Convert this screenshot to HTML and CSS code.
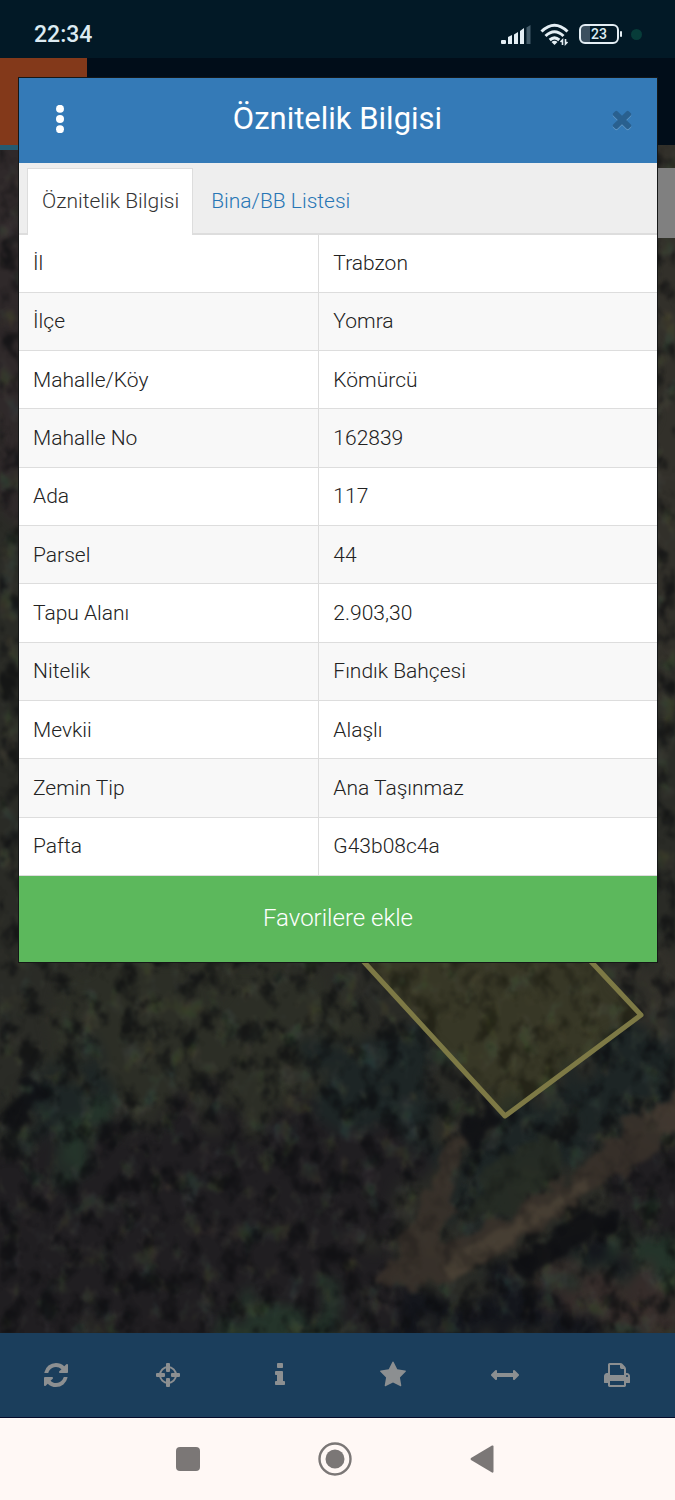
FILE: index.html
```html
<!DOCTYPE html>
<html lang="tr">
<head>
<meta charset="utf-8">
<meta name="viewport" content="width=device-width, initial-scale=1">
<title>Öznitelik Bilgisi</title>
<link rel="stylesheet" href="styles.css">
</head>
<body>
<div class="screen">
  <header class="status">
    <span class="status-time">22:34</span>
    <div class="status-icons">
      <svg width="30" height="19" viewBox="0 0 30 19" fill="#e4eef4"><rect y="15" width="5" height="4" rx="1"/><path d="M7 12l4-2v9H7zM13 9.500l4-2.500v12h-4zM19 6l4-3v16h-4z"/><path d="M25.500 2.500L29.500 0v19h-4z" fill="#435b69"/></svg>
      <svg width="30" height="23" viewBox="0 0 30 23" fill="none" stroke="#e4eef4" stroke-width="3"><path d="M1.500 8.500Q14.500-4 27.500 8.500M5.500 13q9-8.500 18 0M9.700 17q4.800-4.200 9.600 0"/><path d="M11.500 19l3 3 3-3q-3-2.500-6 0z" fill="#e4eef4" stroke="none"/><path d="M22.500 22v-5l-2 2M25.500 16v5l2-2" stroke-width="1.600"/></svg>
      <div class="battery"><span>23</span></div>
      <i class="privacy-dot"></i>
    </div>
  </header>
  <div class="appbar"><div class="appbar-menu"></div></div>
  <main class="map">
    <svg class="map-image" viewBox="0 0 675 1188" preserveAspectRatio="xMidYMax slice" aria-hidden="true">
      <defs>
        <filter id="soft" x="-20%" y="-20%" width="140%" height="140%" color-interpolation-filters="sRGB"><feTurbulence type="fractalNoise" baseFrequency="0.025" numOctaves="4" seed="4" result="n"/><feDisplacementMap in="SourceGraphic" in2="n" scale="110" xChannelSelector="R" yChannelSelector="G"/><feGaussianBlur stdDeviation="6"/></filter>
        <filter id="rough" x="-10%" y="-10%" width="120%" height="120%" color-interpolation-filters="sRGB"><feTurbulence type="fractalNoise" baseFrequency="0.050" numOctaves="3" seed="9" result="n"/><feDisplacementMap in="SourceGraphic" in2="n" scale="30" xChannelSelector="R" yChannelSelector="G"/><feGaussianBlur stdDeviation="2"/></filter>
        <filter id="dark" x="0" y="0" width="100%" height="100%" color-interpolation-filters="sRGB"><feTurbulence type="fractalNoise" baseFrequency="0.050 0.040" numOctaves="4" seed="21"/><feColorMatrix values="0 0 0 0 0.040  0 0 0 0 0.045  0 0 0 0 0.055  4 0 0 0 -2"/><feGaussianBlur stdDeviation="1"/></filter>
        <filter id="light" x="0" y="0" width="100%" height="100%" color-interpolation-filters="sRGB"><feTurbulence type="fractalNoise" baseFrequency="0.050 0.040" numOctaves="4" seed="7"/><feColorMatrix values="0.300 0 0 0 0.130  0 0.300 0 0 0.120  0 0 0.300 0 0.100  0 4 0 0 -1.900"/><feGaussianBlur stdDeviation="1"/></filter>
      </defs>
      <rect width="675" height="1188" fill="#2a2b26"/>
      <g filter="url(#soft)">
        <path fill="#2f292a" d="M-20-20h60v380h-60z"/>
        <path fill="#32302a" d="M640-20h60v560h-60zM640 800h60v80h-60z"/>
        <path fill="#2c2e26" d="M60 815h260l60 80-60 60-120 20-140-40z"/>
        <path fill="#1d2525" d="M310 900l80-20 70 80-40 50-60 80-60 20zM0 970l80-60 30 60-70 30zM680 860v100l-160 60-40 100-30-70 50-90z"/>
        <path fill="#201e21" d="M-60 1000l180-10 100-30 200 20-40 110 40 120H-60zM620 1000h100v110l-100-20z"/>
        <path fill="#24342a" d="M60 970h40v46H55zM570 1100h110v50h-80zM230 1165h120v50H230z"/>
        <path fill="#14161c" d="M400 1155l130-20 100 70H360zM560 1110l60-30 10 40z"/>
        <path fill="#352c2a" d="M540 1110l140 35v30l-130-25z"/>
      </g>
      <rect width="675" height="1188" filter="url(#light)" opacity=".3"/>
      <rect width="675" height="1188" filter="url(#dark)" opacity=".55"/>
      <g filter="url(#rough)" opacity=".85">
        <path fill="#3a322b" d="M378 1138l36-64 36-76 14-10-14 75-10 36 74-32 78-50 46-50 48 18-70 46-100 70-80 40z"/>
        <path fill="#4c4236" d="M440 1117l90-50 50-35 12 14-55 35-80 50z"/>
        <path fill="#463b32" d="M640 965l50-20v62l-28-24z"/>
        <path fill="#0e0f13" d="M510 1118l55-42 48-18 6 20-40 20-50 38zM0 984l20 8 10-35 20-10-25-14zM455 985l26-12 10-34 8 36-24 38z"/>
        <path fill="#262c24" d="M462 1072l34-60 48-20 22 30-50 40z"/>
      </g>
      <rect width="675" height="1188" filter="url(#dark)" opacity=".2"/>
      <path d="M310 765l54 52L505 971l136-101L540 762z" fill="#bcb62c" fill-opacity=".09" stroke="#7d7945" stroke-width="5" stroke-linejoin="round"/>
    </svg>
    <div class="map-control"></div>
  </main>
  <nav class="toolbar" aria-label="Harita araçları">
    <button type="button" aria-label="Yenile"><svg viewBox="-128 0 1792 1792"><path d="M1511 1056q0 5-1 7-64 268-268 434.500t-478 166.500q-146 0-282.500-55t-243.500-157l-129 129q-19 19-45 19t-45-19-19-45v-448q0-26 19-45t45-19h448q26 0 45 19t19 45-19 45l-137 137q71 66 161 102t187 36q134 0 250-65t186-179q11-17 53-117 8-23 30-23h192q13 0 22.500 9.500t9.500 22.500zm25-800v448q0 26-19 45t-45 19h-448q-26 0-45-19t-19-45 19-45l138-138q-148-137-349-137-134 0-250 65t-186 179q-11 17-53 117-8 23-30 23h-199q-13 0-22.500-9.500t-9.500-22.500v-7q65-268 270-434.500t480-166.500q146 0 284 55.500t245 156.500l130-129q19-19 45-19t45 19 19 45z"/></svg></button>
    <button type="button" aria-label="Konum"><svg viewBox="0 0 28 28"><circle cx="14" cy="14" r="8" fill="none" stroke="#8c8f91" stroke-width="2"/><path d="M12 3q0-1 1-1h2q1 0 1 1v7q0 1-1 1h-2q-1 0-1-1zM12 18q0-1 1-1h2q1 0 1 1v7q0 1-1 1h-2q-1 0-1-1zM3 12h7q1 0 1 1v2q0 1-1 1H3q-1 0-1-1v-2q0-1 1-1zM18 12h7q1 0 1 1v2q0 1-1 1h-7q-1 0-1-1v-2q0-1 1-1z"/></svg></button>
    <button type="button" aria-label="Bilgi"><svg viewBox="0 0 1792 1792"><path d="M1216 1344v128q0 26-19 45t-45 19h-512q-26 0-45-19t-19-45v-128q0-26 19-45t45-19h64v-384h-64q-26 0-45-19t-19-45v-128q0-26 19-45t45-19h384q26 0 45 19t19 45v576h64q26 0 45 19t19 45zm-128-1152v192q0 26-19 45t-45 19h-256q-26 0-45-19t-19-45v-192q0-26 19-45t45-19h256q26 0 45 19t19 45z"/></svg></button>
    <button type="button" aria-label="Favoriler"><svg viewBox="0 0 1792 1792"><path d="M1728 647q0 22-26 48l-363 354 86 500q1 7 1 20 0 21-10.500 35.500t-30.500 14.500q-19 0-40-12l-449-236-449 236q-22 12-40 12-21 0-31.500-14.500t-10.500-35.500q0-6 2-20l86-500-364-354q-25-27-25-48 0-37 56-46l502-73 225-455q19-41 49-41t49 41l225 455 502 73q56 9 56 46z"/></svg></button>
    <button type="button" aria-label="Ölçüm"><svg viewBox="0 0 1792 1792"><path d="M1792 896q0 26-19 45l-256 256q-19 19-45 19t-45-19-19-45v-128h-1024v128q0 26-19 45t-45 19-45-19l-256-256q-19-19-19-45t19-45l256-256q19-19 45-19t45 19 19 45v128h1024v-128q0-26 19-45t45-19 45 19l256 256q19 19 19 45z"/></svg></button>
    <button type="button" aria-label="Yazdır"><svg viewBox="0 0 1792 1792"><path d="M448 1536h896v-256h-896v256zm0-640h896v-384h-160q-40 0-68-28t-28-68v-160h-640v640zm1152 64q0-26-19-45t-45-19-45 19-19 45 19 45 45 19 45-19 19-45zm128 0v416q0 13-9.500 22.500t-22.500 9.500h-224v160q0 40-28 68t-68 28h-960q-40 0-68-28t-28-68v-160h-224q-13 0-22.500-9.500t-9.500-22.500v-416q0-79 56.500-135.500t135.500-56.500h64v-544q0-40 28-68t68-28h672q40 0 88 20t76 48l152 152q28 28 48 76t20 88v256h64q79 0 135.500 56.500t56.500 135.500z"/></svg></button>
  </nav>
  <footer class="sysnav">
    <button type="button" aria-label="Son uygulamalar"><svg viewBox="0 0 34 34"><rect x="5" y="5" width="24" height="24" rx="4"/></svg></button>
    <button type="button" aria-label="Ana ekran"><svg viewBox="0 0 34 34"><circle cx="17" cy="17" r="15.500" fill="none" stroke="#7b7776" stroke-width="2.400"/><circle cx="17" cy="17" r="9.500"/></svg></button>
    <button type="button" aria-label="Geri"><svg viewBox="0 0 34 34"><path d="M6 16L27 3.500q1.500-.5 1.500 1v25q0 1.500-1.500 1L6 18q-1-1 0-2z"/></svg></button>
  </footer>

  <section class="modal" role="dialog" aria-labelledby="modal-title">
    <header class="modal-head">
      <button type="button" class="more" aria-label="Menü"><svg viewBox="0 0 28 28" fill="#fff"><circle cx="14" cy="3.800" r="4"/><circle cx="14" cy="14" r="4"/><circle cx="14" cy="24.200" r="4"/></svg></button>
      <h1 id="modal-title">Öznitelik Bilgisi</h1>
      <button type="button" class="close" aria-label="Kapat"><svg viewBox="0 0 1792 1792" fill="#29608f"><path d="M1490 1322q0 40-28 68l-136 136q-28 28-68 28t-68-28l-294-294-294 294q-28 28-68 28t-68-28l-136-136q-28-28-28-68t28-68l294-294-294-294q-28-28-28-68t28-68l136-136q28-28 68-28t68 28l294 294 294-294q28-28 68-28t68 28l136 136q28 28 28 68t-28 68l-294 294 294 294q28 28 28 68z"/></svg></button>
    </header>
    <div class="tabs" role="tablist">
      <button type="button" class="tab tab-active" role="tab" aria-selected="true">Öznitelik Bilgisi</button>
      <button type="button" class="tab" role="tab" aria-selected="false">Bina/BB Listesi</button>
    </div>
    <table class="attributes">
      <tbody>
        <tr><th scope="row">İl</th><td>Trabzon</td></tr>
        <tr><th scope="row">İlçe</th><td>Yomra</td></tr>
        <tr><th scope="row">Mahalle/Köy</th><td>Kömürcü</td></tr>
        <tr><th scope="row">Mahalle No</th><td>162839</td></tr>
        <tr><th scope="row">Ada</th><td>117</td></tr>
        <tr><th scope="row">Parsel</th><td>44</td></tr>
        <tr><th scope="row">Tapu Alanı</th><td>2.903,30</td></tr>
        <tr><th scope="row">Nitelik</th><td>Fındık Bahçesi</td></tr>
        <tr><th scope="row">Mevkii</th><td>Alaşlı</td></tr>
        <tr><th scope="row">Zemin Tip</th><td>Ana Taşınmaz</td></tr>
        <tr><th scope="row">Pafta</th><td>G43b08c4a</td></tr>
      </tbody>
    </table>
    <button type="button" class="favorite">Favorilere ekle</button>
  </section>
</div>
</body>
</html>
```

FILE: styles.css
```css
* { box-sizing: border-box; }

body {
  margin: 0;
  font-family: Roboto, "Noto Sans", sans-serif;
  font-size: 21px;
  color: #222;
}

button {
  margin: 0;
  padding: 0;
  border: 0;
  background: none;
  font: inherit;
  color: inherit;
}

svg { display: block; }

.screen {
  position: relative;
  display: flex;
  flex-direction: column;
  min-height: 100vh;
}

.status {
  display: flex;
  justify-content: space-between;
  align-items: center;
  height: 58px;
  padding: 10px 33px 0 34px;
  background: #021926;
  color: #dcebf2;
}

.status-time { font-size: 23px; font-weight: 500; }

.status-icons { display: flex; align-items: center; gap: 9px; }

.battery {
  position: relative;
  width: 40px;
  height: 20px;
  margin-right: 3px;
  border: 2px solid #e4eef4;
  border-radius: 6px;
  background: linear-gradient(90deg, #3b4f5e 9px, transparent 9px);
  font-size: 14px;
  font-weight: 500;
  line-height: 17px;
  text-align: center;
}

.battery::after {
  content: "";
  position: absolute;
  top: 5px;
  right: -5px;
  width: 2px;
  height: 6px;
  border-radius: 1px;
  background: #e4eef4;
}

.privacy-dot {
  width: 11px;
  height: 11px;
  border-radius: 50%;
  background: #073c39;
}

.appbar { height: 87px; background: #010d19; }

.appbar-menu { width: 87px; height: 87px; background: #83391a; }

.map {
  position: relative;
  flex: 1;
  overflow: hidden;
  background: #2a2b25;
}

.map-image {
  position: absolute;
  inset: 0;
  width: 100%;
  height: 100%;
}

.map::after {
  content: "";
  position: absolute;
  top: 0;
  left: 0;
  width: 87px;
  height: 5px;
  background: #245a70;
}

.map-control {
  position: absolute;
  top: 23px;
  right: 0;
  width: 70px;
  height: 70px;
  background: #808080;
}

.toolbar {
  display: grid;
  grid-template-columns: repeat(6, 1fr);
  height: 85px;
  padding-right: 2px;
  border-bottom: 1px solid #050b2a;
  background: #1b3e5c;
}

.toolbar button { display: grid; place-items: center; }

.toolbar svg { width: 28px; height: 28px; fill: #8c8f91; }

.sysnav {
  display: flex;
  justify-content: center;
  align-items: center;
  gap: 113px;
  height: 82px;
  padding-right: 5px;
  background: #fff8f5;
}

.sysnav svg { width: 34px; height: 34px; fill: #7b7776; }

.modal {
  position: absolute;
  top: 77px;
  left: 18px;
  right: 17px;
  border: 1px solid #151717;
  background: #fff;
}

.modal-head {
  display: grid;
  grid-template-columns: 28px 1fr 28px;
  align-items: center;
  height: 85px;
  padding: 0 21px 4px 27px;
  background: #347ab7;
  color: #fff;
}

.modal-head h1 {
  margin: 0;
  padding-right: 7px;
  font-size: 31px;
  font-weight: 400;
  line-height: 40px;
  text-align: center;
}

.more svg, .close svg { width: 28px; height: 28px; }

.close svg { filter: drop-shadow(0 1px 0 #6398c5); }

.tabs {
  display: flex;
  height: 72px;
  padding: 5px 8px 0;
  border-bottom: 2px solid #ddd;
  background: #eee;
}

.tab {
  padding: 0 18px;
  font-weight: 300;
  color: #2876b5;
}

.tab-active {
  margin-bottom: -2px;
  padding: 0 13px 2px 14px;
  border: 1px solid #ddd;
  border-bottom: 0;
  background: #fff;
  color: #333;
}

.attributes {
  width: 100%;
  height: 641px;
  border-collapse: collapse;
  table-layout: fixed;
}

.attributes th, .attributes td {
  padding: 0 14px;
  border-bottom: 1px solid #ddd;
  font-weight: 300;
  line-height: 24px;
  text-align: left;
}

.attributes th { width: 47%; border-right: 1px solid #ddd; }

.attributes tr:nth-child(even) { background: #f8f8f8; }

.favorite {
  display: block;
  width: 100%;
  height: 86px;
  padding-bottom: 2px;
  background: #5cb85c;
  color: #fff;
  font-size: 24px;
  font-weight: 300;
}
```
